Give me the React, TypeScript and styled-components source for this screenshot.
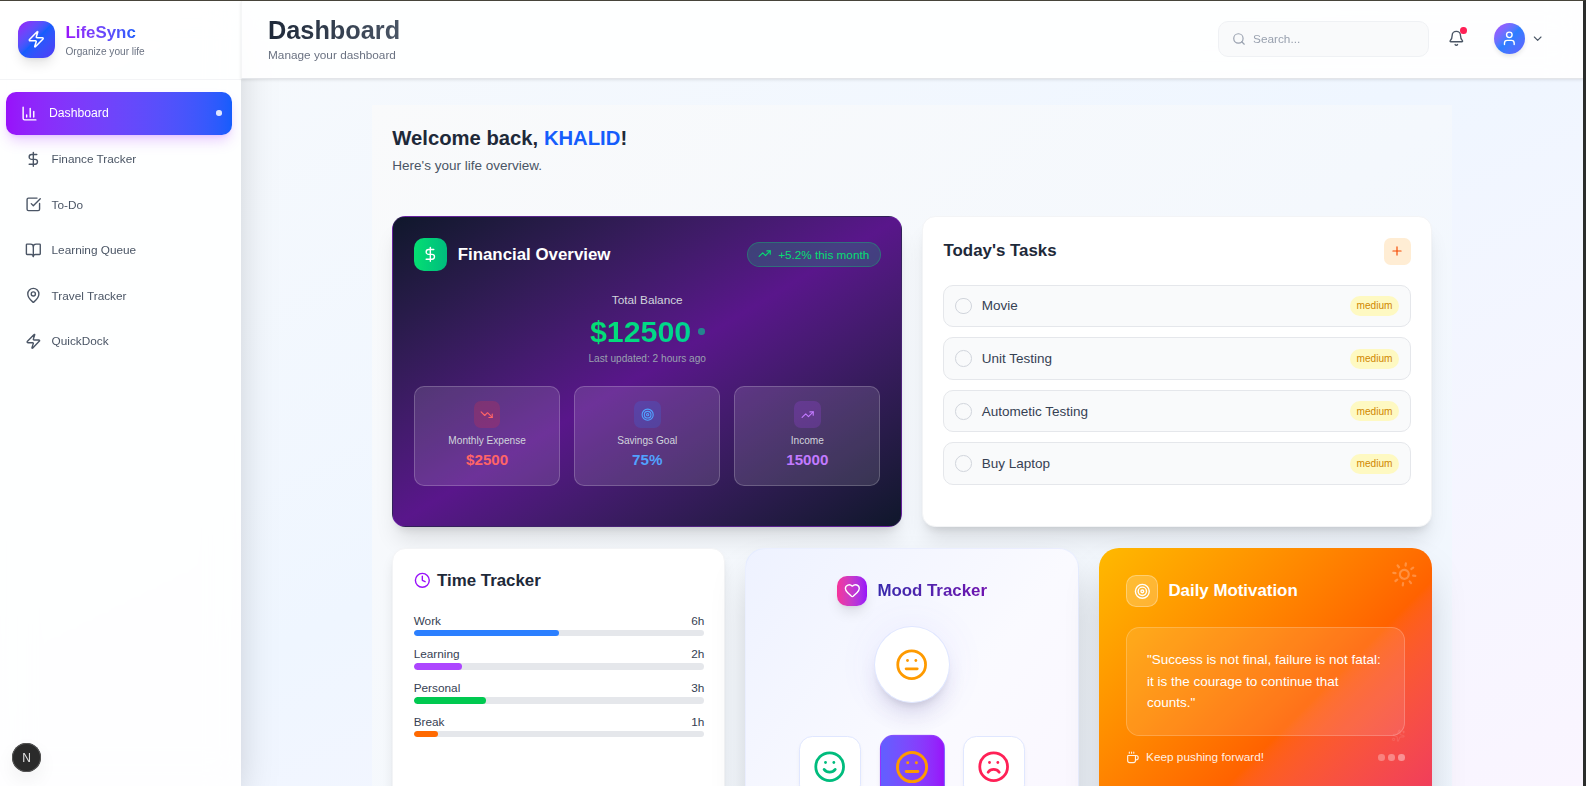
import React from "react";
import styled, { createGlobalStyle, css } from "styled-components";
import {
  Bell,
  BookOpen,
  ChartColumn,
  ChevronDown,
  Clock,
  Coffee,
  DollarSign,
  Frown,
  Heart,
  MapPin,
  Meh,
  Plus,
  Search,
  Smile,
  Sparkles,
  SquareCheckBig,
  Sun,
  Target,
  TrendingDown,
  TrendingUp,
  User,
  Zap,
} from "lucide-react";

/* 1rem is 13.5px: the interface is shown at roughly five sixths of its base size. */
const GlobalStyle = createGlobalStyle`
  html { font-size: 13.5px; }
  body {
    margin: 0;
    font-family: "Liberation Sans", Arial, sans-serif;
    color: #1e2939;
    overflow: hidden;
  }
  *, *::before, *::after { box-sizing: border-box; }
  h1, h2, h3, p { margin: 0; }
  button { font: inherit; border: 0; padding: 0; background: none; }
  svg { display: block; flex-shrink: 0; }
`;

const Window = styled.div`
  height: 786px;
  overflow: hidden;
  border-top: 1px solid #47443a;
  border-right: 3px solid #2b2d2c;
`;

const Shell = styled.div`
  display: flex;
  height: 785px;
  overflow: hidden;
  background: linear-gradient(to bottom right in oklab, #f8fafc, #eff6ff, #faf5ff);
`;

const Sidebar = styled.aside`
  position: relative;
  z-index: 3;
  display: flex;
  flex-direction: column;
  flex: none;
  width: 241px;
  background: rgba(255, 255, 255, 0.9);
  backdrop-filter: blur(16px);
  box-shadow: 0 21px 42px -10px rgba(0, 0, 0, 0.25);
`;

const Brand = styled.div`
  display: flex;
  align-items: center;
  gap: 10.5px;
  height: 79px;
  padding: 0 18px 1.5px;
  border-bottom: 1px solid rgba(229, 231, 235, 0.45);
`;

const BrandMark = styled.div`
  display: grid;
  place-items: center;
  width: 37px;
  height: 37px;
  border-radius: 12px;
  color: #fff;
  background: linear-gradient(to bottom right in oklab, #9810fa, #155dfc, #4f39f6);
  box-shadow: 0 8px 12px -2px rgba(0, 0, 0, 0.1), 0 3px 5px -3px rgba(0, 0, 0, 0.1);
`;

const BrandName = styled.h1`
  width: max-content;
  font-size: 1.25rem;
  line-height: 23.3px;
  font-weight: 700;
  color: transparent;
  background: linear-gradient(to right in oklab, #9810fa, #155dfc);
  background-clip: text;
`;

const BrandTagline = styled.p`
  margin-top: 0.8px;
  font-size: 0.75rem;
  line-height: 13.33px;
  color: #6a7282;
`;

const Nav = styled.nav`
  display: flex;
  flex-direction: column;
  gap: 3.4px;
  padding: 12px 8.6px 12px 6.4px;
`;

const NavItem = styled.a<{ $active?: boolean }>`
  display: flex;
  align-items: center;
  gap: 10px;
  height: 42.1px;
  padding: 0 11px 0 18.5px;
  border-radius: 10px;
  font-size: 0.875rem;
  color: #4a5565;
  ${(p) =>
    p.$active &&
    css`
      height: 43px;
      margin-bottom: -0.4px;
      padding: 0 10.5px 1px 15px;
      gap: 10.6px;
      font-size: 0.905rem;
      color: #fff;
      background: linear-gradient(to right in oklab, #9810fa, #155dfc);
      box-shadow: 0 8px 13px -2px rgba(173, 70, 255, 0.25), 0 3px 5px -3px rgba(173, 70, 255, 0.25);
    `}
`;

const ActiveDot = styled.span`
  width: 5.6px;
  height: 5.6px;
  margin-left: auto;
  border-radius: 50%;
  background: rgba(255, 255, 255, 0.85);
`;

const DevBadge = styled.div`
  position: absolute;
  left: 12px;
  bottom: 14px;
  display: grid;
  place-items: center;
  width: 29px;
  height: 29px;
  border-radius: 50%;
  font-size: 12px;
  color: #e4e4e4;
  background: #2a2a2a;
  box-shadow: inset 0 0 0 1px #555, 0 8px 20px rgba(0, 0, 0, 0.06);
`;

const Main = styled.main`
  display: flex;
  flex-direction: column;
  flex: 1;
  min-width: 0;
`;

const TopBar = styled.header`
  position: relative;
  z-index: 4;
  display: flex;
  align-items: center;
  flex: none;
  height: 78px;
  padding: 0 39px 0 26px;
  background: rgba(255, 255, 255, 0.9);
  backdrop-filter: blur(16px);
  border-bottom: 1px solid rgba(209, 213, 220, 0.6);
  border-left: 1px solid rgba(229, 231, 235, 0.4);
  box-shadow: 0 1px 3px rgba(0, 0, 0, 0.1);
`;

const PageTitle = styled.h2`
  width: max-content;
  font-size: 1.875rem;
  line-height: 30px;
  font-weight: 700;
  color: transparent;
  background: linear-gradient(to right in oklab, #1e2939, #4a5565);
  background-clip: text;
`;

const PageHint = styled.p`
  margin-top: 1.7px;
  font-size: 0.875rem;
  line-height: 16.67px;
  color: #6a7282;
`;

const Tools = styled.div`
  display: flex;
  align-items: center;
  margin-left: auto;
  padding-bottom: 1.5px;
`;

const SearchBox = styled.div`
  display: flex;
  align-items: center;
  gap: 7px;
  width: 211px;
  height: 36px;
  padding: 0 13px;
  border: 1px solid #eff1f4;
  border-radius: 10px;
  font-size: 0.875rem;
  color: #99a1af;
  background: #f9fafb;
`;

const BellButton = styled.button`
  position: relative;
  margin-left: 19px;
  color: #4a5565;
`;

const BellDot = styled.span`
  position: absolute;
  top: -3px;
  right: -2px;
  width: 6.5px;
  height: 7px;
  border-radius: 50%;
  background: #ff2056;
`;

const Account = styled.button`
  display: flex;
  align-items: center;
  gap: 6px;
  margin-left: 29px;
  color: #4a5565;
`;

const Avatar = styled.span`
  display: grid;
  place-items: center;
  width: 31px;
  height: 31px;
  border-radius: 50%;
  color: #fff;
  background: linear-gradient(to bottom right in oklab, #ad46ff, #2b7fff, #615fff);
  box-shadow: 0 3px 5px -1px rgba(0, 0, 0, 0.12);
`;

const Panel = styled.section`
  align-self: center;
  width: 1080px;
  height: 900px;
  flex: none;
  margin-top: 26px;
  padding: 20px;
  background: linear-gradient(to bottom right in oklab, #f9fafb, #eff6ff);
`;

const Welcome = styled.h2`
  padding-left: 0.3px;
  font-size: 1.5rem;
  line-height: 26.7px;
  font-weight: 700;

  span { color: #155dfc; }
`;

const WelcomeNote = styled.p`
  margin: 4.3px 0 40px;
  padding-left: 0.3px;
  font-size: 1rem;
  line-height: 20px;
  color: #4a5565;
`;

const Grid = styled.div<{ $columns: number; $height: number }>`
  display: grid;
  grid-template-columns: repeat(${(p) => p.$columns}, minmax(0, 1fr));
  gap: 20px;
  height: ${(p) => p.$height}px;
  margin-bottom: 21px;
`;

const softShadow = "0 8px 13px -2px rgba(0,0,0,.1), 0 3px 5px -3px rgba(0,0,0,.1)";
const raisedShadow = "0 17px 21px -4px rgba(0,0,0,.1), 0 7px 8px -5px rgba(0,0,0,.12)";
const deepShadow = "0 21px 42px -10px rgba(0,0,0,.25)";

const Card = styled.article`
  padding: 20px;
  border: 1px solid #f3f4f6;
  border-radius: 13.3px;
  background: #fff;
  box-shadow: ${softShadow};
`;

const CardTitle = styled.h3`
  font-size: 1.25rem;
  line-height: 23.3px;
  font-weight: 700;
`;

const CardHead = styled.div<{ $gap?: number; $center?: boolean }>`
  display: flex;
  align-items: center;
  justify-content: ${(p) => (p.$center ? "center" : "flex-start")};
  gap: ${(p) => p.$gap ?? 10.4}px;
  margin-bottom: 20px;
`;

/* Finance */

const FinanceCard = styled(Card)`
  padding: 21px 20.5px 21px 21px;
  color: #fff;
  border-color: rgba(173, 70, 255, 0.2);
  background: linear-gradient(to bottom right in oklab, #0f172b, #59168b, #0f172b);
  box-shadow: ${raisedShadow};
`;

const FinanceMark = styled.div`
  display: grid;
  place-items: center;
  width: 33.3px;
  height: 33.3px;
  border-radius: 10px;
  background: linear-gradient(to right in oklab, #05df72, #00bc7d);
`;

const GrowthPill = styled.div`
  display: flex;
  align-items: center;
  gap: 6.7px;
  height: 25px;
  margin-left: auto;
  padding: 0 10.3px 1px;
  border: 1px solid rgba(5, 223, 114, 0.3);
  border-radius: 99px;
  font-size: 0.87rem;
  color: #05df72;
  background: rgba(45, 120, 125, 0.42);
`;

const Balance = styled.div`
  display: flex;
  flex-direction: column;
  align-items: center;
  margin: 21px 0 20.5px;
`;

const BalanceLabel = styled.p`
  font-size: 0.875rem;
  line-height: 16.67px;
  color: #d1d5dc;
`;

const BalanceRow = styled.div`
  display: flex;
  align-items: center;
  gap: 7px;
  margin: 6px 0 3.5px;
`;

const Amount = styled.div`
  font-size: 2.25rem;
  line-height: 33.3px;
  font-weight: 700;
  color: transparent;
  background: linear-gradient(to right in oklab, #05df72, #00d492);
  background-clip: text;
`;

const PulseDot = styled.span`
  width: 6.3px;
  height: 6.3px;
  border-radius: 50%;
  background: rgba(0, 212, 146, 0.58);
`;

const Updated = styled.p`
  font-size: 0.75rem;
  line-height: 13.33px;
  color: #99a1af;
`;

const Stats = styled.div`
  display: grid;
  grid-template-columns: repeat(3, minmax(0, 1fr));
  gap: 13.8px;
`;

const Stat = styled.div`
  display: flex;
  flex-direction: column;
  align-items: center;
  height: 100px;
  padding: 14.4px 14px 0;
  border: 1px solid rgba(255, 255, 255, 0.2);
  border-radius: 10px;
  background: rgba(255, 255, 255, 0.12);
`;

const StatIcon = styled.span<{ $tint: string; $color: string }>`
  display: grid;
  place-items: center;
  width: 26.7px;
  height: 26.7px;
  border-radius: 6.7px;
  color: ${(p) => p.$color};
  background: ${(p) => p.$tint};
`;

const StatLabel = styled.p`
  margin: 6.6px 0 0.9px;
  font-size: 0.75rem;
  line-height: 13.33px;
  color: #d1d5dc;
`;

const StatValue = styled.p<{ $color: string }>`
  font-size: 1.125rem;
  line-height: 23.3px;
  font-weight: 700;
  color: ${(p) => p.$color};
`;

/* Tasks */

const TasksCard = styled(Card)`
  box-shadow: ${raisedShadow};
`;

const TaskHead = styled.div`
  display: flex;
  align-items: center;
  justify-content: space-between;
  margin: 1px 0 20px;
  padding-left: 0.5px;
`;

const TaskTitle = styled(CardTitle)`
  padding-bottom: 2px;
`;

const AddButton = styled.button`
  display: grid;
  place-items: center;
  width: 26.7px;
  height: 26.7px;
  padding-right: 1.3px;
  border-radius: 6.7px;
  color: #f54900;
  background: #ffedd4;
`;

const TaskList = styled.div`
  display: flex;
  flex-direction: column;
  gap: 10px;
`;

const TaskRow = styled.div`
  display: flex;
  align-items: center;
  gap: 10px;
  height: 42.6px;
  padding: 0 11px;
  border: 1px solid #e5e7eb;
  border-radius: 10px;
  font-size: 1rem;
  color: #364153;
  background: #f9fafb;
`;

const Check = styled.span`
  width: 16.67px;
  height: 16.67px;
  border: 1px solid #d1d5dc;
  border-radius: 50%;
`;

const Priority = styled.span`
  margin-left: auto;
  padding: 3.3px 6.5px;
  border-radius: 99px;
  font-size: 0.75rem;
  line-height: 13.33px;
  color: #d08700;
  background: #fef9c2;
`;

/* Time tracker */

const TimeCard = styled(Card)`
  padding: 20px 20px 20px 20.7px;
`;

const ClockIcon = styled(Clock)`
  color: #9810fa;
`;

const TimeRow = styled.div`
  position: relative;
  top: 0.5px;
  margin-bottom: 9.95px;
`;

const TimeLabel = styled.div`
  display: flex;
  justify-content: space-between;
  font-size: 0.875rem;
  line-height: 17px;
  color: #364153;
`;

const Track = styled.div`
  height: 6.67px;
  border-radius: 99px;
  background: #e5e7eb;
  overflow: hidden;
`;

const Fill = styled.div<{ $color: string }>`
  height: 100%;
  border-radius: 99px;
  background: ${(p) => p.$color};
`;

/* Mood tracker */

const MoodCard = styled(Card)`
  padding: 26.7px;
  border-color: rgba(224, 231, 255, 0.6);
  border-radius: 20px;
  background: linear-gradient(to bottom right in oklab, #eef2ff, #fafaff 50%, #faf5ff);
  box-shadow: ${deepShadow};
`;

const HeartMark = styled.div`
  display: grid;
  place-items: center;
  width: 30px;
  height: 30px;
  border-radius: 10px;
  color: #fff;
  background: linear-gradient(to right in oklab, #f6339a, #9810fa);
  box-shadow: ${softShadow};
`;

const MoodTitle = styled(CardTitle)`
  color: transparent;
  background: linear-gradient(to right in oklab, #372aac, #6e11b0);
  background-clip: text;
`;

const CurrentMood = styled.div`
  display: grid;
  place-items: center;
  width: 75.3px;
  height: 77px;
  margin: 0 auto 33px;
  border: 1px solid #e0e7ff;
  border-radius: 50%;
  color: #fe9a00;
  background: #fff;
  box-shadow: 0 17px 21px -4px rgba(60, 40, 120, 0.12), 0 7px 8px -5px rgba(0, 0, 0, 0.12),
    0 0 40px rgba(97, 95, 255, 0.08);
`;

const MoodOptions = styled.div`
  display: flex;
  justify-content: center;
  gap: 20px;
`;

const MoodOption = styled.button<{ $color: string; $active?: boolean }>`
  display: grid;
  place-items: center;
  width: 62px;
  height: 62px;
  border: 1px solid #e0e7ff;
  border-radius: 13.3px;
  color: ${(p) => p.$color};
  background: #fff;
  box-shadow: 0 3px 5px -1px rgba(0, 0, 0, 0.06);
  ${(p) =>
    p.$active &&
    css`
      border-color: rgba(152, 80, 255, 0.5);
      background: linear-gradient(to right in oklab, #615fff, #9810fa);
      transform: translate(0.4px, 0.4px) scale(1.05);
    `}
`;

/* Motivation */

const MotivationCard = styled(Card)`
  position: relative;
  padding: 27px 27px 27px 27.4px;
  border: 0;
  border-radius: 20px;
  color: #fff;
  background: linear-gradient(135deg in oklab, #ffb900, #ff6200 48.5%, #e60076 96%);
  box-shadow: ${deepShadow};
`;

const SunMark = styled(Sun)`
  position: absolute;
  top: 13px;
  right: 14px;
  color: rgba(255, 255, 255, 0.25);
  transform: rotate(8deg);
`;

const SparkMark = styled(Sparkles)`
  position: absolute;
  top: 181px;
  right: 27px;
  color: rgba(255, 255, 255, 0.1);
  transform: rotate(8deg);
`;

const TargetMark = styled.div`
  display: grid;
  place-items: center;
  width: 32px;
  height: 32px;
  border: 1px solid rgba(255, 255, 255, 0.3);
  border-radius: 10px;
  background: rgba(255, 255, 255, 0.2);
`;

const Quote = styled.p`
  height: 108.7px;
  margin-bottom: 13.3px;
  padding: 21px 20px 20px 20px;
  border: 1px solid rgba(255, 255, 255, 0.2);
  border-radius: 13.3px;
  font-size: 1rem;
  line-height: 21.67px;
  background: rgba(255, 255, 255, 0.1);
`;

const Encouragement = styled.div`
  display: flex;
  align-items: center;
  gap: 6.67px;
  font-size: 0.875rem;
  line-height: 16.67px;
  color: rgba(255, 255, 255, 0.9);
`;

const Dots = styled.span`
  display: flex;
  gap: 3.33px;
  margin-left: auto;
`;

const Dot = styled.span<{ $opacity: number }>`
  width: 6.67px;
  height: 6.67px;
  border-radius: 50%;
  background: rgba(255, 255, 255, ${(p) => p.$opacity});
`;

const links = [
  { label: "Finance Tracker", Icon: DollarSign },
  { label: "To-Do", Icon: SquareCheckBig },
  { label: "Learning Queue", Icon: BookOpen },
  { label: "Travel Tracker", Icon: MapPin },
  { label: "QuickDock", Icon: Zap },
];

const stats = [
  { label: "Monthly Expense", value: "$2500", color: "#ff6467", tint: "rgba(251,44,54,.2)", Icon: TrendingDown },
  { label: "Savings Goal", value: "75%", color: "#51a2ff", tint: "rgba(43,127,255,.2)", Icon: Target },
  { label: "Income", value: "15000", color: "#c27aff", tint: "rgba(173,70,255,.2)", Icon: TrendingUp },
];

const tasks = ["Movie", "Unit Testing", "Autometic Testing", "Buy Laptop"];

const hours = [
  { label: "Work", value: 6, color: "#2b7fff" },
  { label: "Learning", value: 2, color: "#ad46ff" },
  { label: "Personal", value: 3, color: "#00c950" },
  { label: "Break", value: 1, color: "#ff6900" },
];
const totalHours = 12;

export default function App() {
  return (
    <>
      <GlobalStyle />
      <Window>
        <Shell>
          <Sidebar>
            <Brand>
              <BrandMark>
                <Zap size={18.5} />
              </BrandMark>
              <div>
                <BrandName>LifeSync</BrandName>
                <BrandTagline>Organize your life</BrandTagline>
              </div>
            </Brand>
            <Nav>
              <NavItem $active>
                <ChartColumn size={17} />
                Dashboard
                <ActiveDot />
              </NavItem>
              {links.map(({ label, Icon }) => (
                <NavItem key={label}>
                  <Icon size={16.67} />
                  {label}
                </NavItem>
              ))}
            </Nav>
            <DevBadge>N</DevBadge>
          </Sidebar>

          <Main>
            <TopBar>
              <div>
                <PageTitle>Dashboard</PageTitle>
                <PageHint>Manage your dashboard</PageHint>
              </div>
              <Tools>
                <SearchBox>
                  <Search size={14} />
                  Search...
                </SearchBox>
                <BellButton>
                  <Bell size={16.67} />
                  <BellDot />
                </BellButton>
                <Account>
                  <Avatar>
                    <User size={16.67} />
                  </Avatar>
                  <ChevronDown size={13.33} />
                </Account>
              </Tools>
            </TopBar>

            <Panel>
              <Welcome>
                Welcome back, <span>KHALID</span>!
              </Welcome>
              <WelcomeNote>Here's your life overview.</WelcomeNote>

              <Grid $columns={2} $height={311}>
                <FinanceCard>
                  <CardHead>
                    <FinanceMark>
                      <DollarSign size={16.67} />
                    </FinanceMark>
                    <CardTitle>Financial Overview</CardTitle>
                    <GrowthPill>
                      <TrendingUp size={13.33} />
                      +5.2% this month
                    </GrowthPill>
                  </CardHead>
                  <Balance>
                    <BalanceLabel>Total Balance</BalanceLabel>
                    <BalanceRow>
                      <Amount>$12500</Amount>
                      <PulseDot />
                    </BalanceRow>
                    <Updated>Last updated: 2 hours ago</Updated>
                  </Balance>
                  <Stats>
                    {stats.map(({ label, value, color, tint, Icon }) => (
                      <Stat key={label}>
                        <StatIcon $tint={tint} $color={color}>
                          <Icon size={13.33} />
                        </StatIcon>
                        <StatLabel>{label}</StatLabel>
                        <StatValue $color={color}>{value}</StatValue>
                      </Stat>
                    ))}
                  </Stats>
                </FinanceCard>

                <TasksCard>
                  <TaskHead>
                    <TaskTitle>Today's Tasks</TaskTitle>
                    <AddButton>
                      <Plus size={14} />
                    </AddButton>
                  </TaskHead>
                  <TaskList>
                    {tasks.map((task) => (
                      <TaskRow key={task}>
                        <Check />
                        {task}
                        <Priority>medium</Priority>
                      </TaskRow>
                    ))}
                  </TaskList>
                </TasksCard>
              </Grid>

              <Grid $columns={3} $height={420}>
                <TimeCard>
                  <CardHead $gap={6.7}>
                    <ClockIcon size={16.67} />
                    <CardTitle>Time Tracker</CardTitle>
                  </CardHead>
                  {hours.map(({ label, value, color }) => (
                    <TimeRow key={label}>
                      <TimeLabel>
                        <span>{label}</span>
                        <span>{value}h</span>
                      </TimeLabel>
                      <Track>
                        <Fill $color={color} style={{ width: `${(value / totalHours) * 100}%` }} />
                      </Track>
                    </TimeRow>
                  ))}
                </TimeCard>

                <MoodCard>
                  <CardHead $center>
                    <HeartMark>
                      <Heart size={16.67} />
                    </HeartMark>
                    <MoodTitle>Mood Tracker</MoodTitle>
                  </CardHead>
                  <CurrentMood>
                    <Meh size={33.33} />
                  </CurrentMood>
                  <MoodOptions>
                    <MoodOption $color="#00bc7d">
                      <Smile size={33.33} />
                    </MoodOption>
                    <MoodOption $color="#fe9a00" $active>
                      <Meh size={33.33} />
                    </MoodOption>
                    <MoodOption $color="#ff2056">
                      <Frown size={33.33} />
                    </MoodOption>
                  </MoodOptions>
                </MoodCard>

                <MotivationCard>
                  <SunMark size={26.67} />
                  <CardHead>
                    <TargetMark>
                      <Target size={16.67} />
                    </TargetMark>
                    <CardTitle>Daily Motivation</CardTitle>
                  </CardHead>
                  <Quote>"Success is not final, failure is not fatal: it is the courage to continue that counts."</Quote>
                  <SparkMark size={13.33} />
                  <Encouragement>
                    <Coffee size={13.33} />
                    Keep pushing forward!
                    <Dots>
                      <Dot $opacity={0.3} />
                      <Dot $opacity={0.34} />
                      <Dot $opacity={0.4} />
                    </Dots>
                  </Encouragement>
                </MotivationCard>
              </Grid>
            </Panel>
          </Main>
        </Shell>
      </Window>
    </>
  );
}
